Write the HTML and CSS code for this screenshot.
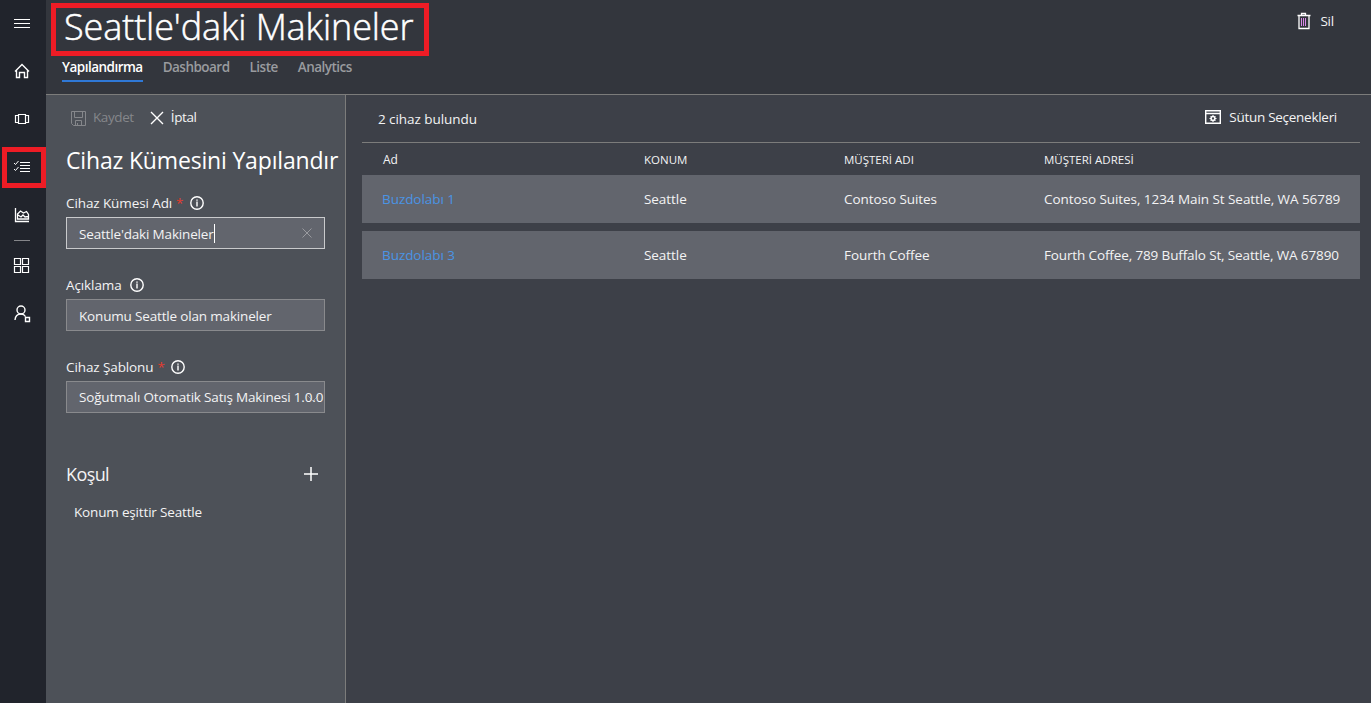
FILE: index.html
```html
<!DOCTYPE html>
<html lang="tr">
<head>
<meta charset="utf-8">
<title>Seattle'daki Makineler</title>
<link rel="stylesheet" href="styles.css">
</head>
<body>
<div class="app">
  <nav class="rail">
    <a class="rail-item menu"><svg width="18" height="18" viewBox="0 0 18 18"><path d="M1 4.500h16M1 8.500h16M1 12.500h16"/></svg></a>
    <a class="rail-item home"><svg width="18" height="18" viewBox="0 0 18 18"><path d="M2 9.500 9 2.500l7 7M3.500 8.500v7h3v-5h5v5h3v-7" stroke-width="1.400"/></svg></a>
    <a class="rail-item devices"><svg width="18" height="18" viewBox="0 0 18 18"><path d="M5.500 4.500h7v9h-7zM5 5.500H2.500v7H5M13 5.500h2.500v7H13" stroke-width="1.200"/></svg></a>
    <a class="rail-item sets"><svg width="18" height="18" viewBox="0 0 18 18"><path d="M7 4.500h10M7 7.500h10M7 10.500h10M7 13.500h10M1 5l1.500 1.500L5.500 3M1 11l1.500 1.500L5.500 9"/></svg></a>
    <a class="rail-item analytics"><svg width="18" height="18" viewBox="0 0 18 18"><path d="M2.500 2v13.500H16M4.500 13V8l3-3 3 2 3-1.500 2 3v4.500zM5 9l3 2 2-2 2 2 3-.500" stroke-width="1.300"/></svg></a>
    <span class="rail-line"></span>
    <a class="rail-item apps"><svg width="18" height="18" viewBox="0 0 18 18"><path d="M1.500 1.500h6v6h-6zM9.500 1.500h6v6h-6zM1.500 9.500h6v6h-6zM9.500 9.500h6v6h-6z" stroke-width="1.200"/></svg></a>
    <a class="rail-item admin"><svg width="18" height="18" viewBox="0 0 18 18"><circle cx="8" cy="5" r="4" stroke-width="1.400"/><path d="M2 15c.3-4 2.500-6 6-6 2 0 3.500.800 4.500 2.500M12.500 12.500h4v4h-4z" stroke-width="1.400"/></svg></a>
  </nav>
  <div class="page">
    <header class="header">
      <div class="heading">
        <h1 class="title">Seattle'daki Makineler</h1>
        <div class="tabs"><a class="tab active">Yapılandırma</a><a class="tab">Dashboard</a><a class="tab">Liste</a><a class="tab">Analytics</a></div>
      </div>
      <button class="delete"><svg width="14" height="18" viewBox="0 0 14 18"><path d="M.5 3.500h13M4.500 3V1.500h4V3M2 4v12.500h10V4" stroke-width="1.300"/><path d="M4.500 6v8M6.500 6v8M8.500 6v8" stroke="#d989e8"/></svg><span>Sil</span></button>
    </header>
    <div class="body">
      <aside class="panel">
        <div class="commands">
          <span class="cmd save"><svg width="15" height="15" viewBox="0 0 15 15"><path d="M.5.500h14v14H2.500l-2-2zM3.500.500v6h8v-6M4.500 14v-4.500h6V14M6.500 12v2"/></svg><span>Kaydet</span></span>
          <span class="cmd cancel"><svg width="14" height="14" viewBox="0 0 14 14"><path d="m1 1 12 12M13 1 1 13" stroke-width="1.400"/></svg><span>İptal</span></span>
        </div>
        <h2 class="panel-title">Cihaz Kümesini Yapılandır</h2>
        <div class="field">
          <label class="label"><span>Cihaz Kümesi Adı</span><i class="req">*</i><svg width="14" height="14" viewBox="0 0 14 14"><circle cx="7" cy="7" r="6.200" stroke-width="1.400"/><path d="M7 3.500v1.200M7 5.500V10.500" stroke-width="1.400"/></svg></label>
          <div class="input focus"><span>Seattle'daki Makineler</span><b class="caret"></b><svg class="clear" width="10" height="10" viewBox="0 0 10 10"><path d="m.5.500 9 9m0-9-9 9"/></svg></div>
        </div>
        <div class="field">
          <label class="label"><span>Açıklama</span><svg width="14" height="14" viewBox="0 0 14 14"><circle cx="7" cy="7" r="6.200" stroke-width="1.400"/><path d="M7 3.500v1.200M7 5.500V10.500" stroke-width="1.400"/></svg></label>
          <div class="input"><span>Konumu Seattle olan makineler</span></div>
        </div>
        <div class="field">
          <label class="label"><span>Cihaz Şablonu</span><i class="req">*</i><svg width="14" height="14" viewBox="0 0 14 14"><circle cx="7" cy="7" r="6.200" stroke-width="1.400"/><path d="M7 3.500v1.200M7 5.500V10.500" stroke-width="1.400"/></svg></label>
          <div class="input select"><svg class="chevron" width="12" height="7" viewBox="0 0 12 7"><path d="m.5.500 5.500 5.500L11.500.500"/></svg><span class="value">Soğutmalı Otomatik Satış Makinesi 1.0.0</span></div>
        </div>
        <div class="condition-head"><h3 class="condition-title">Koşul</h3><svg width="16" height="16" viewBox="0 0 16 16"><path d="M8 1v14M1 8h14" stroke-width="1.500"/></svg></div>
        <p class="condition">Konum eşittir Seattle</p>
      </aside>
      <main class="content">
        <div class="toolbar">
          <span class="count">2 cihaz bulundu</span>
          <span class="options"><svg width="16" height="14" viewBox="0 0 16 14"><path d="M.7.700h14.600v12.600H.700zM1 3.500h14" stroke-width="1.400"/><circle cx="8" cy="8.500" r="1.900" stroke-width="1.500"/><path d="M8 5v1.400M8 10.600V12M4.500 8.500h1.400M10.100 8.500h1.400M5.500 6l1 1M9.500 10l1 1M10.500 6l-1 1M6.500 10l-1 1"/></svg><span>Sütun Seçenekleri</span></span>
        </div>
        <div class="row head"><span class="first">Ad</span><span>KONUM</span><span>MÜŞTERİ ADI</span><span>MÜŞTERİ ADRESİ</span></div>
        <div class="row data"><a class="link">Buzdolabı 1</a><span>Seattle</span><span>Contoso Suites</span><span>Contoso Suites, 1234 Main St Seattle, WA 56789</span></div>
        <div class="row data"><a class="link">Buzdolabı 3</a><span>Seattle</span><span>Fourth Coffee</span><span class="tight">Fourth Coffee, 789 Buffalo St, Seattle, WA 67890</span></div>
      </main>
    </div>
  </div>
</div>
</body>
</html>
```
FILE: styles.css
```css
* { box-sizing: border-box; }
body { margin: 0; background: #3d4048; color: #f3f3f4; font: 13.500px/20px "Open Sans", "Noto Sans", sans-serif; letter-spacing: -.06px; overflow: hidden; }
h1, h2, h3, p { margin: 0; font-weight: 400; }
svg { fill: none; stroke: #fff; flex: none; display: block; }
.app { display: flex; height: 703px; }
.rail { width: 46px; background: #21242c; display: flex; flex-direction: column; padding-top: 3px; }
.rail-item { height: 40px; margin-bottom: 8px; padding-left: 13px; display: flex; align-items: center; }
.menu svg { margin-top: 1px; }
.rail-item.sets { width: 44px; height: 41px; margin-left: 2px; margin-bottom: 7px; border: 5px solid #ee1c25; padding-left: 6px; }
.sets svg { margin-top: -2px; }
.rail-line { width: 16px; height: 1px; margin: -3px 0 5px 14px; background: #85868a; }
.page { flex: 1; min-width: 0; display: flex; flex-direction: column; }
.header { height: 95px; background: #33363d; border-bottom: 1px solid #7c7c7b; display: flex; justify-content: space-between; padding: 3px 37px 0 5px; }
.title { width: 378px; height: 53px; border: 5px solid #ee1c25; padding-left: 8px; color: #fff; font-size: 36px; font-weight: 300; letter-spacing: -.09px; -webkit-text-stroke: .5px #fff; line-height: 37px; white-space: nowrap; }
.tabs { display: flex; gap: 20px; padding-left: 11px; }
.tab { height: 26px; line-height: 23px; font-size: 13.500px; letter-spacing: -.52px; font-weight: 600; color: #999b9f; border-bottom: 2px solid transparent; white-space: nowrap; }
.active { color: #fff; border-color: #2f78d6; }
.delete { height: 20px; margin-top: 8px; padding: 0; border: 0; background: none; color: inherit; font: inherit; display: flex; align-items: center; gap: 10px; }
.delete { letter-spacing: -.2px; gap: 9px; }
.body { flex: 1; display: flex; }
.panel { width: 300px; background: #4d5158; border-right: 1px solid #7c7c7b; padding: 13px 0 0 20px; white-space: nowrap; letter-spacing: -.17px; }
.commands { display: flex; height: 20px; gap: 16px; padding-left: 5px; letter-spacing: -.4px; line-height: 18px; }
.cmd { display: flex; align-items: center; gap: 7px; }
.cmd span { margin-top: -2px; }
.save { color: #85878b; }
.save svg { stroke: #85878b; }
.panel-title { margin-top: 15px; font-size: 23px; line-height: 34px; color: #fff; }
.field { margin-bottom: 26px; }
.panel-title + .field { margin-top: 16px; }
.label { display: flex; align-items: center; height: 20px; margin-bottom: 4px; letter-spacing: -.1px; }
.label svg { margin: -1px 0 0 8px; }
.req { color: #e33b2e; font-style: normal; margin-left: 4px; width: 6px; }
.input { position: relative; width: 259px; height: 32px; padding: 1px 0 0 12px; border: 1px solid #898a8d; background: #62656d; display: flex; align-items: center; }
.focus { border-color: #c9cacc; }
.caret { width: 1px; height: 19px; background: #fff; }
.value { position: relative; letter-spacing: -.18px; margin-top: -2px; }
.clear, .chevron { position: absolute; right: 12px; top: 10px; stroke: #999a9f; }
.chevron { right: 5px; top: 13px; }
.condition-head { display: flex; align-items: center; justify-content: space-between; width: 253px; margin-top: 47px; height: 28px; }
.condition-title { font-size: 18px; line-height: 28px; letter-spacing: -.6px; }
.condition { margin-top: 14px; padding-left: 8px; }
.content { flex: 1; min-width: 0; padding: 0 11px 0 16px; white-space: nowrap; }
.toolbar { height: 48px; padding: 0 23px 0 16px; display: flex; justify-content: space-between; align-items: center; border-bottom: 1px solid #7c7c7b; }
.options { display: flex; align-items: center; gap: 8px; margin-top: -3px; letter-spacing: -.28px; }
.row { display: grid; grid-template-columns: 262px 200px 200px 1fr; padding-left: 20px; align-items: center; }
.head { height: 32px; font-size: 11.500px; padding-top: 2px; letter-spacing: 0; }
.first { padding-left: 1px; font-size: 12px; }
.data { height: 48px; margin-bottom: 8px; background: #62656d; }
.link { color: #4a94e4; }
.tight { letter-spacing: -.13px; }
```
